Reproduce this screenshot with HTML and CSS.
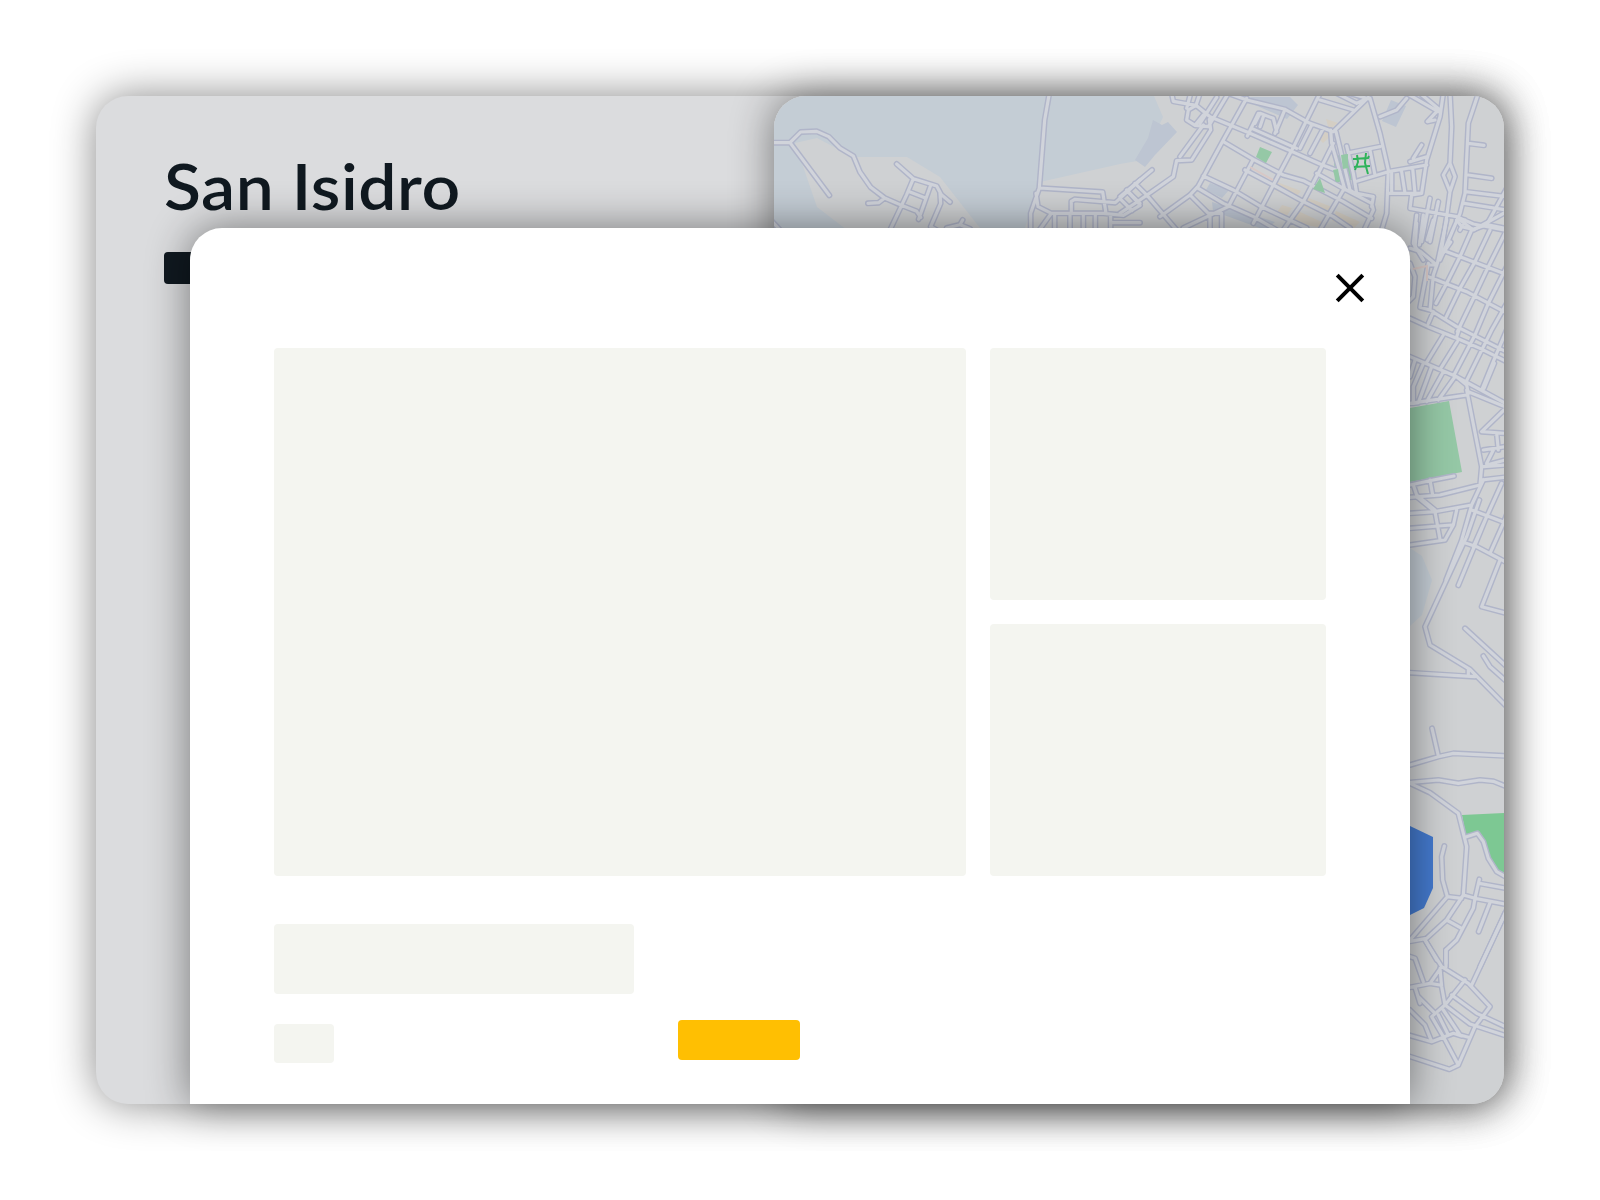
FILE: index.html
```html
<!DOCTYPE html>
<html lang="es">
<head>
<meta charset="utf-8">
<title>San Isidro</title>
<link rel="stylesheet" href="styles.css">
</head>
<body>
<main class="card">
  <section class="summary">
    <h1 class="title">San Isidro</h1>
    <div class="tag"></div>
  </section>
  <section class="map">
    <svg class="map-canvas" viewBox="774 96 730 1008">
      <defs>
        <g id="roads" fill="none" stroke-linecap="round" stroke-linejoin="round">
          <g transform="translate(740 60) scale(.33333)">
            <path d="M90 248H150L182 216L230 214L266 230L300 264L340 288L360 336L392 382L434 414L480 434L530 454L542 472M150 248L268 406M384 430L416 428L434 414M470 312L520 356L590 378L604 404L630 426M520 356L500 404L450 510M572 376L536 478M510 396L556 414M600 400L602 430L572 500L590 510M96 484L120 510M620 504L660 494L668 480M660 494L690 506M928 100L914 180L898 384L872 460V510M898 384L1088 396L1098 460M888 400L894 440L934 460L1090 460L1150 466L1200 436M934 460L898 510M994 460V424L1004 418L1126 428L1200 360M944 462V510M990 462V510M1030 462V510M1066 462V510M1112 462V510M1112 488H1200M1140 416L1176 452M1165 396L1200 430"/>
          </g>
          <g transform="translate(1120 60) scale(.33333)">
            <path d="M155 100L160 124L228 136L270 170L390 220L510 272L600 312L660 335M228 136L205 150L200 180L225 196L250 165M212 100L200 145M240 100L228 136M325 100L265 200L225 196M290 112L240 190M325 100L380 120L495 148L570 190L640 215M268 178L272 210L215 300L170 302L160 350L60 420L0 460M250 195L180 290M96 330L0 410M45 370L80 405M20 390L55 430M80 405L170 510M380 115L310 240L235 378L210 405L120 470M310 245L400 298L490 345L550 362L670 425L755 475M250 348L340 390L420 438L560 504M235 385L310 430L400 470L470 510M210 405L265 460H305V510M270 460V510M190 504L325 440L400 298M375 330L460 375L550 425L640 470L690 504M395 205L530 265M382 228L415 160M405 190L420 160L460 175L470 215M430 170L420 200M465 220L495 148M400 490L460 375L520 262L600 100M490 510L550 425L600 330L640 250M570 280L610 205M600 510L670 390M540 265L575 195M600 120L700 150M650 100L710 130L740 115M690 100L750 118M590 340L668 384L755 430L760 450L735 504M640 215L745 112M632 210L635 250L655 320L675 390M648 215L690 390L705 400M680 258L700 340L710 400L760 410L755 440M750 115L780 220L805 330L800 460L785 510M690 278L780 260M705 365L805 335L920 315M750 270L765 345M780 170L830 150L860 115M860 100L955 155M900 100L960 150M950 155L922 185L945 180M970 100L960 170L920 300L905 400L875 405L870 445L1010 470L1060 492L1152 510M805 400H905M815 340V400M845 335L855 400M878 325L885 400M870 305L920 290M880 295L905 255M990 100L995 200L990 310L970 345L990 395L1005 350L990 310M990 395L980 470L960 600M1075 100L1045 190L1035 400L1020 460L960 600M1045 250L1092 256M1045 345L1115 355M1036 395L1160 410M1033 430L1160 450M1020 480L1060 510L1160 455M1035 480L1020 510M890 465L880 550L910 600M910 465L900 545M930 415L905 545M955 425L930 545"/>
          </g>
          <g transform="translate(1300 220) scale(.33333)">
            <path d="M330 85L362 95L410 135H385M350 10L345 85L362 95M370 10L358 75M400 0L382 60M440 0L412 130L400 165L390 270L360 262L385 130M415 120L452 66M470 0L485 20L520 28L560 14L620 26M560 14L620 -95M515 30L480 110L440 190L408 250M440 95L610 160M385 170L500 215L612 275M330 295L385 320L470 355L540 385L620 425M390 270L470 320L612 392M330 410L465 468L612 548M385 310L400 275M570 30L525 125L480 205L435 298M620 30L565 140L525 225L472 335M620 140L565 250L525 345L462 465M620 250L575 330L500 482M620 330L590 400L545 510M430 345L378 430M472 365L422 445M480 320L470 350M583 430L552 505M330 130L345 170L340 230L325 245M345 420L330 470M370 430L340 500V550L355 548M395 440L355 548M430 455L380 545M465 470L415 540M470 470L500 495L505 520M330 550L500 525M500 510L545 740L540 795L420 825L330 832M505 515L615 560M612 570L545 635L615 640M590 640L595 690M550 690L615 680M560 735L615 720M550 740L615 735M580 690L560 730M545 780L615 772M330 795L400 780L462 768M390 780L398 825M340 795L350 825M350 825L405 870"/>
          </g>
          <g transform="translate(1390 480) scale(.33333)">
            <path d="M60 100L135 95L245 75L280 0M60 145L145 138L185 135M60 195L165 180L190 135L200 90M135 95L150 178M80 50L135 95M245 75L215 180L168 300M268 60L230 170L105 440L120 495L240 568L345 675M245 90L350 130M215 185L260 200L345 245M290 110L205 316M335 10L290 110L250 200M375 40L340 130L300 220M330 240L275 380L350 400M225 445L345 555M280 528L300 560L345 600M60 578L255 590M235 568V585M126 745L145 828M60 855L145 830L190 820L350 828"/>
          </g>
          <g transform="translate(1390 720) scale(.33333)">
            <path d="M55 188L145 180L205 190L270 180L310 184L350 200M60 190L120 218L205 280L230 380L220 525L170 600L110 655L60 664M225 352L262 340L280 365L295 415L320 455L350 472M163 378L155 410L158 480L172 530L215 535M172 530L60 660M220 525L255 535L350 553M268 478L255 535L250 565L200 660L168 690V730M268 490L350 505M300 548L266 635M345 580L270 740M170 600L215 625M105 660L140 720"/>
          </g>
          <g transform="translate(1390 900) scale(.33333)">
            <path d="M105 120L155 200L235 250L300 320L255 380L205 495L178 508L55 468M168 150V200M155 200L120 250L60 262M350 30L245 255M55 168L75 175L100 245M120 250L150 255M150 205L155 260L165 315L240 372L350 408M165 315L225 240M165 315L125 350L160 410L205 495M160 330L210 405L235 412M185 285L260 340L350 382M75 262L90 310M85 290L130 335M60 330L105 375L125 425L55 405M125 425L190 400L215 408M145 345L175 405"/>
          </g>
        </g>
      </defs>
      <rect class="land" x="774" y="96" width="730" height="1008"/>
      <path class="water" d="M774 96H1154L1163 117L1143 160L1120 164L1040 182L1025 228H980L940 177L907 157H853L817 138L795 143L817 207L847 230H774ZM1410 548L1422 556L1432 580L1422 615L1410 626Z"/>
      <path class="block" d="M1153 120L1162 125L1168 122L1177 132L1155 155L1145 167L1135 160L1148 138ZM1248 97H1290L1298 105L1287 119L1255 105ZM1391 100L1406 106L1396 127L1382 121ZM1212 202L1275 222L1265 230L1213 211ZM1210 183L1229 190L1222 198L1206 190Z"/>
      <path class="commercial" d="M1326 119L1338 123L1329 130ZM1323 128L1333 134L1323 143L1318 138ZM1277 182L1301 191L1294 199L1275 190ZM1306 197L1332 207L1326 215L1302 206ZM1282 205L1292 208L1284 220L1275 215ZM1298 211L1326 224L1322 228L1292 222ZM1336 211L1360 222L1354 228L1332 221Z"/>
      <path class="park" d="M1334 156L1348 154L1352 180L1335 183ZM1410 408L1449 401L1462 472L1410 482Z"/>
      <path class="park bright" d="M1462 815L1504 813V874L1492 866L1477 833L1466 836Z"/>
      <path class="lake" d="M1410 826L1433 837V888L1424 908L1410 915Z"/>
      <use href="#roads" class="road-edge"/>
      <use href="#roads" class="road-fill"/>
      <path class="avenue" d="M1250 167L1273 180M1413 269L1427 266V281"/>
      <path class="park" d="M1260 147L1272 152L1266 163L1256 157ZM1320 178L1325 193L1313 189ZM1341 155L1348 154V168L1343 169ZM1333 170L1338 169L1340 181L1336 182Z"/>
      <path class="paths" d="M1353 159L1368 158L1369 156M1354 167L1370 166M1357 155L1358 162L1355 170M1366 153L1365 163L1368 174"/>
    </svg>
  </section>
  <section class="modal">
    <header class="modal-bar">
      <svg class="close" viewBox="0 0 32 32"><path d="M3.2 3.2L28.8 28.8M28.8 3.2L3.2 28.8"/></svg>
    </header>
    <div class="gallery">
      <div class="photo photo-main"></div>
      <div class="photo"></div>
      <div class="photo"></div>
    </div>
    <div class="heading-slot"></div>
    <div class="actions">
      <div class="meta-slot"></div>
      <div class="button"></div>
    </div>
  </section>
</main>
</body>
</html>
```
FILE: styles.css
```css
* { box-sizing: border-box; }

body {
  margin: 0;
  background: #fff;
  font-family: Lato, "Open Sans", sans-serif;
}

.card {
  position: relative;
  display: grid;
  grid-template-columns: 678px 730px;
  width: 1408px;
  height: 1008px;
  margin: 96px;
  border-radius: 32px;
  background: #dbdcde;
  box-shadow: 0 0 43px rgba(0, 0, 0, .47);
}

.summary { padding: 52px 0 0 68px; }

.title {
  margin: 0;
  color: #101920;
  font-size: 64px;
  line-height: 76px;
  font-weight: 600;
  letter-spacing: .5px;
  white-space: nowrap;
  transform: scaleX(1.06);
  transform-origin: 0 0;
}

.tag {
  width: 160px;
  height: 32px;
  margin-top: 28px;
  border-radius: 4px;
  background: #101920;
}

.map {
  overflow: hidden;
  height: 1008px;
  border-radius: 32px;
  box-shadow: 0 0 43px rgba(0, 0, 0, .47);
}

.map-canvas { display: block; width: 730px; height: 1008px; }

.land { fill: #cfd1d3; }
.water { fill: #c4cdd5; }
.block { fill: #bdc5d2; }
.commercial { fill: #d4cec4; }
.avenue { fill: none; stroke: #d8c8c6; stroke-width: 2; }
.park { fill: #95c8a6; }
.bright { fill: #7dc893; }
.lake { fill: #447ace; }
.road-edge { stroke: #b0b5c9; stroke-width: 18px; }
.road-fill { stroke: #d1d4db; stroke-width: 9.5px; }
.paths { fill: none; stroke: #2fb35b; stroke-width: 2; }

.modal {
  position: absolute;
  left: 94px;
  bottom: 0;
  width: 1220px;
  height: 876px;
  padding: 44px 84px 0;
  border-radius: 32px 32px 0 0;
  background: #fff;
  box-shadow: 0 0 43px rgba(0, 0, 0, .47);
}

.modal-bar {
  display: flex;
  justify-content: flex-end;
  height: 76px;
  margin-right: -40px;
}

.close {
  width: 32px;
  height: 32px;
  fill: none;
  stroke: #000;
  stroke-width: 4;
  stroke-linecap: butt;
}

.gallery {
  display: grid;
  grid-template-columns: 692px 336px;
  grid-template-rows: 252px 252px;
  gap: 24px;
}

.photo, .heading-slot, .meta-slot {
  border-radius: 4px;
  background: #f4f5f0;
}

.photo-main { grid-row: span 2; }

.heading-slot { width: 360px; height: 70px; margin-top: 48px; }

.actions {
  display: flex;
  align-items: flex-end;
  gap: 344px;
  margin-top: 26px;
}

.meta-slot { width: 59.5px; height: 39.5px; margin-bottom: -3px; }

.button {
  width: 122.5px;
  height: 40px;
  border-radius: 4px;
  background: #ffbf02;
}
```
